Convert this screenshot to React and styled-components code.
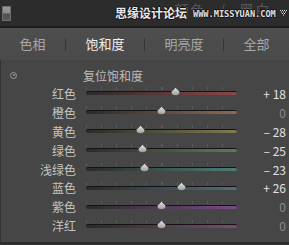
import React from 'react'
import styled, { createGlobalStyle } from 'styled-components'

const GlobalStyle = createGlobalStyle`
  html, body {
    margin: 0;
    padding: 0;
    background: #464646;
  }
  body {
    font-family: "Noto Sans CJK SC", "Liberation Sans", sans-serif;
  }
`

const Frame = styled.div`
  width: 289px;
  height: 245px;
  display: flex;
  flex-direction: column;
  overflow: hidden;
  background: #464646;
`

const TopBar = styled.div`
  position: relative;
  height: 26px;
  flex: none;
  background: #2c2c2c;
  border-bottom: 2px solid #1b1b1b;
  display: flex;
  align-items: center;
  padding-left: 2px;
`

const PanelIcon = styled.div`
  width: 7px;
  height: 13px;
  border: 1px solid #6e6e6e;
  background: linear-gradient(#9a9a9a 0%, #8a8a8a 45%, #4e4e4e 55%, #5a5a5a 100%);
`

const Ghost = styled.span`
  position: absolute;
  left: 174px;
  top: 1px;
  font-size: 15px;
  line-height: 18px;
  color: #565656;
  letter-spacing: 1px;
  white-space: pre;
`

const Watermark = styled.div`
  position: absolute;
  left: 115px;
  top: 5px;
  display: flex;
  align-items: flex-end;
  gap: 6px;
  white-space: nowrap;
`

const MarkTitle = styled.span`
  font-size: 12px;
  line-height: 16px;
  font-weight: bold;
  color: #e8e8e8;
  text-shadow: 1px 0 0 #111, -1px 0 0 #111, 0 1px 0 #111, 0 -1px 0 #111;
`

const MarkUrl = styled.span`
  font-family: "DejaVu Sans Mono", monospace;
  font-size: 8.6px;
  line-height: 10px;
  font-weight: bold;
  color: #e0e0e0;
  text-shadow: 1px 0 0 #111, -1px 0 0 #111, 0 1px 0 #111, 0 -1px 0 #111;
  margin-bottom: 2px;
`

const Caret = styled.svg`
  position: absolute;
  right: 2px;
  top: 10px;
`

const Tabs = styled.div`
  height: 32px;
  flex: none;
  display: flex;
  align-items: center;
  background: linear-gradient(#4e4e4e, #4a4a4a);
`

const Tab = styled.div`
  flex: 1 1 auto;
  text-align: center;
  font-size: 13px;
  line-height: 16px;
  color: ${p => (p.active ? '#f0f0f0' : '#a8a8a8')};
`

const Sep = styled.div`
  width: 1px;
  height: 13px;
  background: #363636;
  flex: none;
`

const Body = styled.div`
  flex: 1;
  display: flex;
  flex-direction: column;
  padding-top: 6px;
  border-left: 1px solid #333;
  border-bottom: 3px solid #2e2e2e;
`

const ResetRow = styled.div`
  height: 18px;
  display: flex;
  align-items: center;
`

const ResetDot = styled.div`
  width: 5px;
  height: 5px;
  margin-left: 9px;
  border: 1.5px solid #9a9a9a;
  border-radius: 50%;
  display: flex;
  align-items: center;
  justify-content: center;
  &::after {
    content: '';
    width: 2px;
    height: 2px;
    border-radius: 50%;
    background: #9a9a9a;
  }
`

const ResetText = styled.span`
  margin-left: 66px;
  font-size: 12px;
  color: #bdbdbd;
`

const Row = styled.div`
  height: 18.9px;
  display: grid;
  grid-template-columns: 75px 151px 39px;
  column-gap: 10px;
  align-items: center;
`

const Label = styled.span`
  text-align: right;
  font-size: 12px;
  color: #c4c4c4;
`

const Track = styled.div`
  position: relative;
  height: 4px;
  border-radius: 2px;
  border-top: 1px solid #141414;
  background: linear-gradient(90deg, #2a2a2a 0%, ${p => p.color} 100%);
  box-sizing: border-box;
  &::before {
    content: '';
    position: absolute;
    left: 0;
    right: 0;
    top: -5px;
    height: 3px;
    background: repeating-linear-gradient(90deg, #5a5a5a 0, #5a5a5a 1px, transparent 1px, transparent 15.1px);
  }
`

const Thumb = styled.svg`
  position: absolute;
  top: -5px;
  margin-left: -5.5px;
`

const Value = styled.span`
  text-align: right;
  font-size: 12px;
  color: ${p => (p.zero ? '#8a8a8a' : '#e2e2e2')};
  white-space: pre;
`

const rows = [
  { name: '红色', value: 18, color: '#8c4646' },
  { name: '橙色', value: 0, color: '#8c6a52' },
  { name: '黄色', value: -28, color: '#7e7c50' },
  { name: '绿色', value: -25, color: '#5d7c52' },
  { name: '浅绿色', value: -23, color: '#4c7d76' },
  { name: '蓝色', value: 26, color: '#4d6e80' },
  { name: '紫色', value: 0, color: '#7a4a86' },
  { name: '洋红', value: 0, color: '#7c4a72' }
]

const fmt = v => (v === 0 ? '0' : v > 0 ? `+ ${v}` : `\u2013 ${-v}`)

const App = () => (
  <Frame>
    <GlobalStyle />
    <TopBar>
      <PanelIcon />
      <Ghost>颜色   /   黑白</Ghost>
      <Watermark>
        <MarkTitle>思缘设计论坛</MarkTitle>
        <MarkUrl>WWW.MISSYUAN.COM</MarkUrl>
      </Watermark>
      <Caret width="7" height="6" viewBox="0 0 7 6">
        {[0, 2, 4, 6].map(x => <rect key={'a' + x} x={x} y="0" width="1" height="1" fill="#ddd" />)}
        {[1, 3, 5].map(x => <rect key={'b' + x} x={x} y="1.5" width="1" height="1" fill="#ddd" />)}
        {[2, 4].map(x => <rect key={'c' + x} x={x} y="3" width="1" height="1" fill="#ddd" />)}
        <rect x="3" y="4.5" width="1" height="1" fill="#ddd" />
      </Caret>
    </TopBar>
    <Tabs>
      <Tab>色相</Tab>
      <Sep />
      <Tab active>饱和度</Tab>
      <Sep />
      <Tab>明亮度</Tab>
      <Sep />
      <Tab>全部</Tab>
    </Tabs>
    <Body>
      <ResetRow>
        <ResetDot />
        <ResetText>复位饱和度</ResetText>
      </ResetRow>
      {rows.map(r => (
        <Row key={r.name}>
          <Label>{r.name}</Label>
          <Track color={r.color}>
            <Thumb
              width="11"
              height="9"
              viewBox="0 0 11 9"
              style={{ left: `${50 + r.value / 2}%` }}
            >
              <defs>
                <linearGradient id="tg" x1="0" y1="0" x2="0" y2="1">
                  <stop offset="0" stopColor="#e4e4e4" />
                  <stop offset="1" stopColor="#9c9c9c" />
                </linearGradient>
              </defs>
              <path
                d="M5.5 0.5 L9.6 4.6 Q10.4 8.5 5.5 8.5 Q0.6 8.5 1.4 4.6 Z"
                fill="url(#tg)"
                stroke="#3a3a3a"
                strokeWidth="0.6"
              />
            </Thumb>
          </Track>
          <Value zero={r.value === 0}>{fmt(r.value)}</Value>
        </Row>
      ))}
    </Body>
  </Frame>
)

export default App
